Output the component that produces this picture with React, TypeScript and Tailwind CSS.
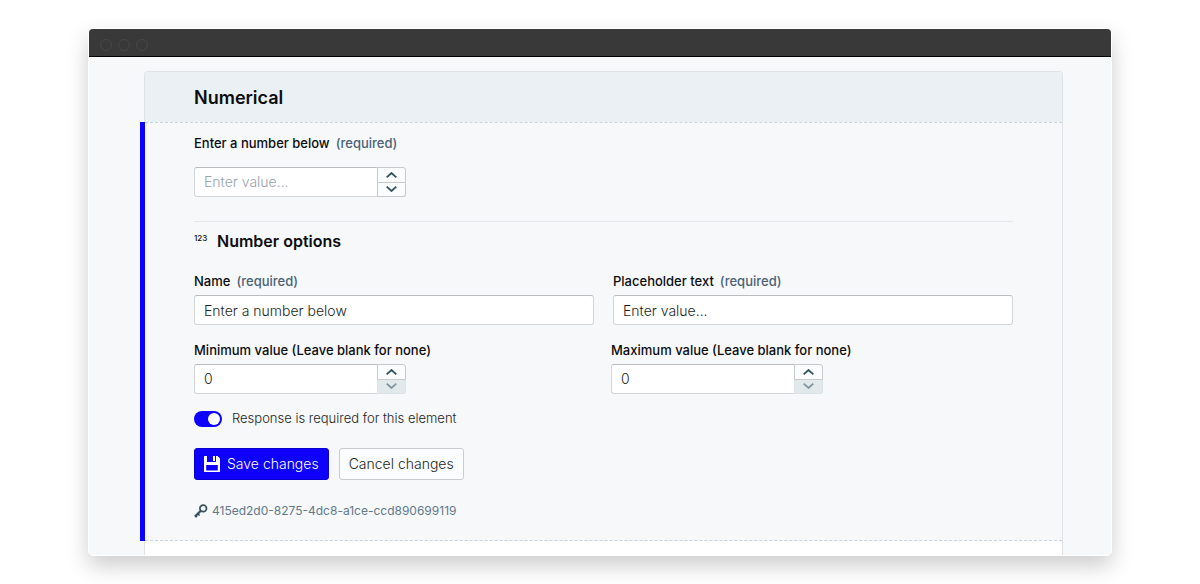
import { useState } from 'react';
import type { ReactNode } from 'react';

interface FieldLabelProps {
  htmlFor: string;
  required?: boolean;
  children: ReactNode;
}

function FieldLabel({ htmlFor, required, children }: FieldLabelProps) {
  return (
    <label htmlFor={htmlFor} className="block text-[13px] leading-5 font-[550] text-[#0b0d0f]">
      {children}
      {required && <span className="ml-[6px] font-medium text-[#4a6375]">(required)</span>}
    </label>
  );
}

interface NumberFieldProps {
  id: string;
  value: string;
  placeholder?: string;
  min?: number;
  onChange: (value: string) => void;
}

function NumberField({ id, value, placeholder, min, onChange }: NumberFieldProps) {
  const current = Number(value) || 0;
  const atMin = min !== undefined && current <= min;

  return (
    <div className="flex h-[30px] w-[212px]">
      <input
        id={id}
        type="text"
        inputMode="numeric"
        value={value}
        placeholder={placeholder}
        onChange={(e) => onChange(e.target.value)}
        className="min-w-0 flex-1 rounded-l-[3px] border border-r-0 border-[#d3d6d9] border-t-[#b9bdc0] bg-white px-[9px] text-sm font-light text-[#1b1f22] placeholder:text-[#98a3ad]"
      />
      <div className="flex w-[29px] flex-col">
        <button
          type="button"
          aria-label="Increase value"
          onClick={() => onChange(String(current + 1))}
          className="flex h-4 items-center justify-center rounded-tr-[3px] border border-[#c6cacd] bg-[#fbfcfd] text-[#34505f]"
        >
          <ChevronIcon up />
        </button>
        <button
          type="button"
          aria-label="Decrease value"
          disabled={atMin}
          onClick={() => onChange(String(current - 1))}
          className="flex h-[14px] items-center justify-center rounded-br-[3px] border border-t-0 border-[#c6cacd] bg-[#fbfcfd] pb-px text-[#34505f] disabled:border-[#dbe3e7] disabled:bg-[#e1e9ed] disabled:text-[#82949f]"
        >
          <ChevronIcon />
        </button>
      </div>
    </div>
  );
}

function ChevronIcon({ up }: { up?: boolean }) {
  return (
    <svg width="11" height="6" viewBox="0 0 11 6" fill="none" stroke="currentColor" strokeWidth="1.8" aria-hidden="true">
      <path d={up ? 'M.7 5.3 5.5 1l4.8 4.3' : 'M.7.7 5.5 5l4.8-4.3'} />
    </svg>
  );
}

function SaveIcon() {
  return (
    <svg width="16" height="16" viewBox="0 0 16 16" aria-hidden="true">
      <path
        fill="currentColor"
        fillRule="evenodd"
        d="M.5 0H3v6h9V0h1.5L16 2.5v13l-.5.5H.5l-.5-.5V.5zM2.2 9v5.4h11.6V9zM9 0h2v5H9z"
      />
    </svg>
  );
}

function KeyIcon() {
  return (
    <svg width="14" height="14" viewBox="0 0 14 14" fill="none" stroke="#34505f" aria-hidden="true">
      <circle cx="9.2" cy="4.4" r="3.3" strokeWidth="1.7" />
      <path d="M6.8 6.8.9 12.6" strokeWidth="2.2" />
      <path d="m3.6 9.6 2 1.9M1.4 11.6l1.6 1.5" strokeWidth="1.5" />
    </svg>
  );
}

const textInput =
  'h-[30px] w-full rounded-[3px] border border-[#d3d6d9] border-t-[#b9bdc0] bg-white px-[9px] text-sm font-light text-[#1b1f22]';

export default function App() {
  const [answer, setAnswer] = useState('');
  const [name, setName] = useState('Enter a number below');
  const [placeholder, setPlaceholder] = useState('Enter value...');
  const [minimum, setMinimum] = useState('0');
  const [maximum, setMaximum] = useState('0');
  const [required, setRequired] = useState(true);

  return (
    <div className="bg-white px-4 pt-7 pb-7 font-['Inter',sans-serif]">
      <div className="mx-auto max-w-5xl rounded-[5px] border border-white bg-[#f7f8fa] shadow-[0_10px_22px_rgba(0,0,0,0.2)]">
        {/* Window bar */}
        <div className="flex h-7 items-center gap-[6px] rounded-t-[4px] border-b border-black bg-[#39393a] px-[11px] pt-1">
          <span className="size-3 rounded-full border border-[#484849]" />
          <span className="size-3 rounded-full border border-[#484849]" />
          <span className="size-3 rounded-full border border-[#484849]" />
        </div>

        <div className="pt-[14px] pr-12 pl-[55px]">
          <div className="rounded-t-[4px] border border-b-0 border-[#dfe3e7] bg-white">
            <header className="flex h-[50px] items-center rounded-t-[3px] bg-[#ebf0f4] px-[49px] pt-[2px]">
              <h1 className="text-lg font-semibold text-[#0b0d0f]">Numerical</h1>
            </header>

            <section className="-ml-[5px] flex bg-[#f7f8fa]">
              <div className="w-[5px] shrink-0 bg-[#0d00ff]" />
              <div className="min-w-0 flex-1 border-y border-dashed border-[#c9d5dd] px-[49px] pt-[10px] pb-[19px]">
                <FieldLabel htmlFor="answer" required>Enter a number below</FieldLabel>
                <div className="mt-[14px]">
                  <NumberField id="answer" value={answer} placeholder="Enter value..." onChange={setAnswer} />
                </div>

                <hr className="mt-6 border-[#e4e8eb]" />

                <div className="mt-[7px] flex h-6 items-center">
                  <span className="mb-[6px] w-[23px] text-[8px] leading-3 font-medium text-[#0b0d0f]">123</span>
                  <h2 className="text-base font-semibold text-[#0b0d0f]">Number options</h2>
                </div>

                <form onSubmit={(e) => e.preventDefault()}>
                  <div className="mt-[18px] grid grid-cols-2 gap-[19px]">
                    <div>
                      <FieldLabel htmlFor="name" required>Name</FieldLabel>
                      <input
                        id="name"
                        type="text"
                        value={name}
                        onChange={(e) => setName(e.target.value)}
                        className={`mt-1 ${textInput}`}
                      />
                    </div>
                    <div>
                      <FieldLabel htmlFor="placeholder" required>Placeholder text</FieldLabel>
                      <input
                        id="placeholder"
                        type="text"
                        value={placeholder}
                        onChange={(e) => setPlaceholder(e.target.value)}
                        className={`mt-1 ${textInput}`}
                      />
                    </div>
                  </div>

                  <div className="mt-[15px] grid grid-cols-2 gap-[15px]">
                    <div className="flex flex-col gap-1">
                      <FieldLabel htmlFor="minimum">Minimum value (Leave blank for none)</FieldLabel>
                      <NumberField id="minimum" value={minimum} min={0} onChange={setMinimum} />
                    </div>
                    <div className="flex flex-col gap-1">
                      <FieldLabel htmlFor="maximum">Maximum value (Leave blank for none)</FieldLabel>
                      <NumberField id="maximum" value={maximum} min={0} onChange={setMaximum} />
                    </div>
                  </div>

                  <div className="mt-[15px] flex h-5 items-center gap-[10px]">
                    <input
                      id="required"
                      type="checkbox"
                      role="switch"
                      checked={required}
                      onChange={(e) => setRequired(e.target.checked)}
                      className="flex h-4 w-7 appearance-none items-center rounded-full bg-[#a3adb6] p-[2px] before:size-3 before:rounded-full before:bg-white checked:justify-end checked:bg-[#0d00ff]"
                    />
                    <label htmlFor="required" className="text-[13px] font-light text-[#1b1f22]">
                      Response is required for this element
                    </label>
                  </div>

                  <div className="mt-[19px] flex gap-[10px]">
                    <button
                      type="submit"
                      className="flex h-8 items-center gap-[7px] rounded-[3px] border border-[#0a00d0] bg-[#0d00ff] px-[9px] text-sm font-light text-white"
                    >
                      <SaveIcon />
                      Save changes
                    </button>
                    <button
                      type="button"
                      className="h-8 rounded-[3px] border border-[#c9cccf] bg-[#fbfcfd] px-[9px] text-sm font-light text-[#1b1f22]"
                    >
                      Cancel changes
                    </button>
                  </div>
                </form>

                <div className="mt-[21px] flex h-5 items-center gap-1 text-xs text-[#61788a]">
                  <KeyIcon />
                  <span>415ed2d0-8275-4dc8-a1ce-ccd890699119</span>
                </div>
              </div>
            </section>

            <div className="h-[14px]" />
          </div>
        </div>
      </div>
    </div>
  );
}
